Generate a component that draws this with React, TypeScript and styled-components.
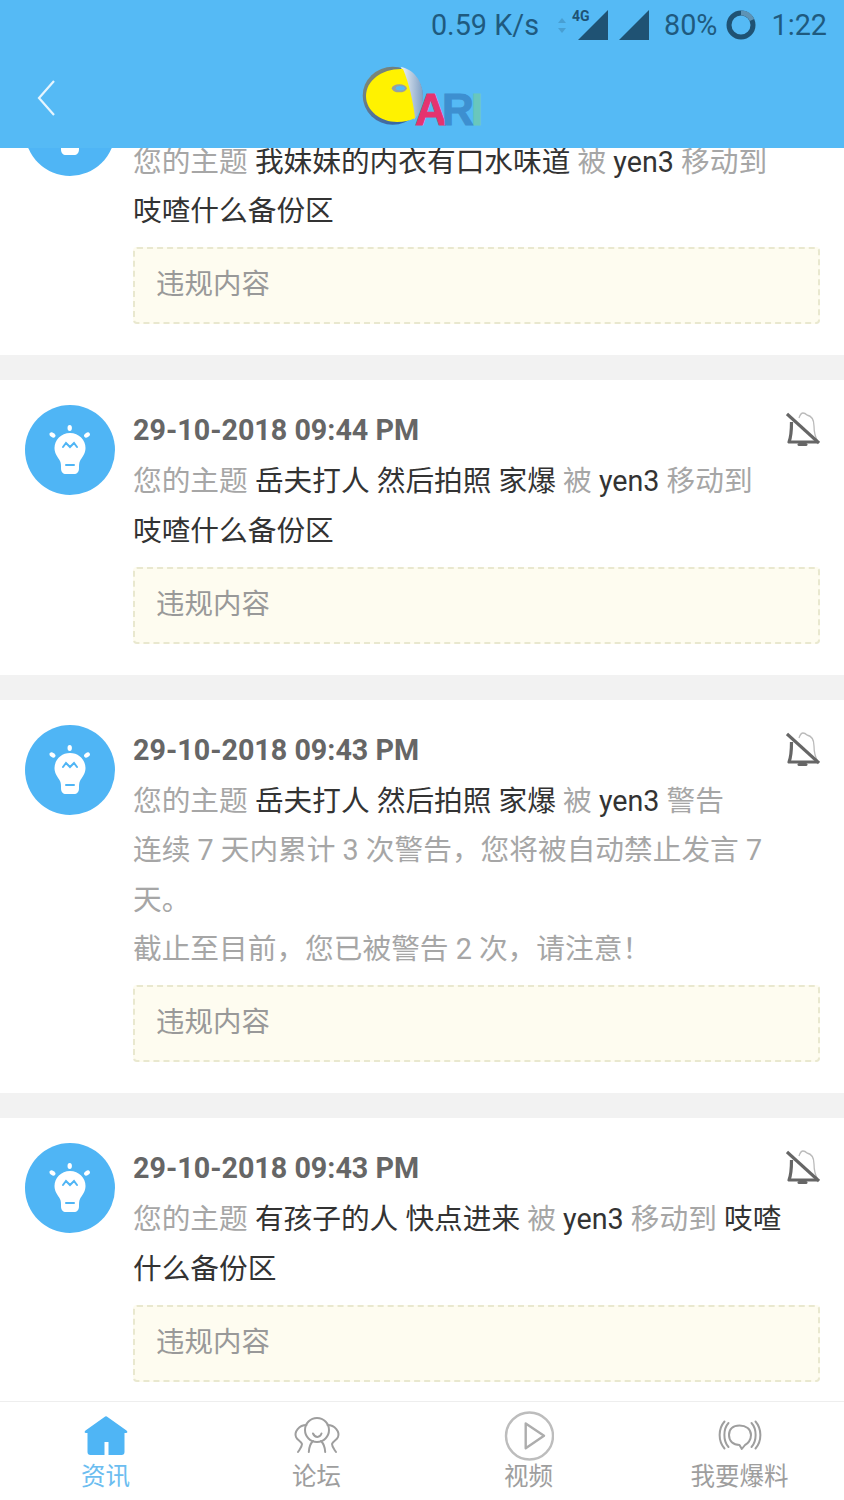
import styled, { createGlobalStyle } from "styled-components";

const GlobalStyle = createGlobalStyle`
  html, body {
    margin: 0;
    padding: 0;
    background: #fff;
  }
  body {
    font-family: Roboto, "Noto Sans CJK SC", sans-serif;
  }
`

type Part = { text: string, dark?: boolean }

type Notice = {
    date: string
    lines: Part[]
}

const notices: Notice[] = [
    {
        date: "29-10-2018 09:44 PM",
        lines: [
            { text: "您的主题 " },
            { text: "我妹妹的内衣有口水味道", dark: true },
            { text: " 被 " },
            { text: "yen3", dark: true },
            { text: " 移动到 " },
            { text: "吱喳什么备份区", dark: true },
        ],
    },
    {
        date: "29-10-2018 09:44 PM",
        lines: [
            { text: "您的主题 " },
            { text: "岳夫打人 然后拍照 家爆", dark: true },
            { text: " 被 " },
            { text: "yen3", dark: true },
            { text: " 移动到 " },
            { text: "吱喳什么备份区", dark: true },
        ],
    },
    {
        date: "29-10-2018 09:43 PM",
        lines: [
            { text: "您的主题 " },
            { text: "岳夫打人 然后拍照 家爆", dark: true },
            { text: " 被 " },
            { text: "yen3", dark: true },
            { text: " 警告\n连续 7 天内累计 3 次警告，您将被自动禁止发言 7 天。\n截止至目前，您已被警告 2 次，请注意！" },
        ],
    },
    {
        date: "29-10-2018 09:43 PM",
        lines: [
            { text: "您的主题 " },
            { text: "有孩子的人 快点进来", dark: true },
            { text: " 被 " },
            { text: "yen3", dark: true },
            { text: " 移动到 " },
            { text: "吱喳什么备份区", dark: true },
        ],
    },
]

const BackIcon = () => (
    <svg width="20" height="38" viewBox="0 0 20 38" fill="none">
        <path d="M18 2 L3 19 L18 36" stroke="#e6f5fe" strokeWidth="2.2" />
    </svg>
)

const Logo = () => (
    <LogoSvg width="130" height="72" viewBox="0 0 130 72">
        <defs>
            <linearGradient id="rim" x1="0" y1="0" x2="1" y2="1">
                <stop offset="0" stopColor="#8c8f6a" />
                <stop offset="0.55" stopColor="#4f6f9c" />
                <stop offset="1" stopColor="#1f5fae" />
            </linearGradient>
            <linearGradient id="shine" x1="0" y1="0" x2="1" y2="0">
                <stop offset="0" stopColor="#eef3f8" />
                <stop offset="1" stopColor="#7f9fc4" />
            </linearGradient>
        </defs>
        <ellipse cx="35.700" cy="30.700" rx="30" ry="29" fill="url(#rim)" />
        <path d="M44 2 C56 4 66 16 66 31 C66 41 62 49 57 55 C53 40 50 18 44 2 Z" fill="url(#shine)" />
        <path d="M46 4 C26 3 9 15 9 31 C9 46 24 57 40 57 C47 57 53 55.500 58 53 C56 36 52 18 46 4 Z" fill="#fff200" />
        <ellipse cx="42.300" cy="23.300" rx="7.500" ry="4" fill="#98a0a0" />
        <ellipse cx="43.300" cy="23.300" rx="4.500" ry="2.200" fill="#55baf5" />
        <LogoLetter x="58" y="60" fill="#e5336f" stroke="#e5336f">A</LogoLetter>
        <LogoLetter x="85" y="60" fill="#3d8fd0" stroke="#3d8fd0">R</LogoLetter>
        <LogoLetter x="114" y="60" fill="#6fcbb0" stroke="#6fcbb0" opacity="0.8">I</LogoLetter>
    </LogoSvg>
)

const NetArrows = () => (
    <svg width="10" height="15" viewBox="0 0 10 15" fill="#3f8ab8" opacity="0.55">
        <path d="M5 0 L9 5 L1 5 Z" />
        <path d="M5 15 L9 10 L1 10 Z" />
    </svg>
)

const Signal = () => (
    <svg width="30" height="30" viewBox="0 0 30 30" fill="#1f5273">
        <path d="M30 0 V30 H0 Z" />
    </svg>
)

const BatteryRing = () => (
    <svg width="30" height="30" viewBox="0 0 30 30" fill="none">
        <circle cx="15" cy="15" r="12" stroke="#1f5273" strokeWidth="5" />
        <path d="M15 3 A12 12 0 0 1 26 10" stroke="#5d93b5" strokeWidth="5" />
    </svg>
)

const BulbIcon = () => (
    <svg width="90" height="90" viewBox="0 0 90 90">
        <circle cx="45" cy="45" r="45" fill="#4fb5f5" />
        <path d="M45 28 C36 28 29.500 35 29.500 43 C29.500 49 33 52 35 56 C36 58 36 60 36 63 C36 67 38 69 41 69 H49 C52 69 54 67 54 63 C54 60 54 58 55 56 C57 52 60.500 49 60.500 43 C60.500 35 54 28 45 28 Z" fill="#fff" />
        <path d="M38 42 L41 38 L45 42 L49 38 L52 42" stroke="#4fb5f5" strokeWidth="2" fill="none" strokeLinecap="round" />
        <path d="M41 60 H49" stroke="#4fb5f5" strokeWidth="2" strokeLinecap="round" />
        <ellipse cx="44.700" cy="23" rx="2.200" ry="3" fill="#fff" />
        <ellipse cx="27.500" cy="30" rx="3.200" ry="2.200" fill="#fff" transform="rotate(35 27.500 30)" />
        <ellipse cx="62" cy="30" rx="3.200" ry="2.200" fill="#fff" transform="rotate(-35 62 30)" />
    </svg>
)

const MutedBell = () => (
    <svg width="34" height="36" viewBox="0 0 34 36" fill="none">
        <path d="M13 6 C14 3 15 1 17 1 C19 1 20 2 21 3 C26 4 28 9 28 14 C28 20 29 25 32 30" stroke="#bbb" strokeWidth="1.300" />
        <path d="M5.500 10 C5.500 18 5.500 24 3 30 H31" stroke="#666" strokeWidth="3.200" strokeLinejoin="round" />
        <path d="M1 2 L33 31" stroke="#666" strokeWidth="3.200" />
        <path d="M13 32.500 H20" stroke="#666" strokeWidth="3" strokeLinecap="round" />
    </svg>
)

const HomeIcon = () => (
    <svg width="50" height="50" viewBox="0 0 50 50">
        <path d="M23.500 6 C24.500 5 25.500 5 26.500 6 L45.500 19.500 C47 20.700 46.500 22 45 22 H43.500 V41 C43.500 43 42.500 44 40.500 44 H9.500 C7.500 44 6.500 43 6.500 41 V22 H5 C3.500 22 3 20.700 4.500 19.500 Z" fill="#4fb5f5" />
        <rect x="23.500" y="31" width="4" height="13" fill="#fff" />
    </svg>
)

const PeopleIcon = () => (
    <svg width="50" height="50" viewBox="0 0 50 50" fill="none" stroke="#9e9e9e" strokeWidth="2" strokeLinecap="round">
        <circle cx="25" cy="19" r="12" />
        <path d="M21 22.500 C23 27 28 27 29.500 22.500" />
        <path d="M14.500 14 C7 14 2 21 4 26 C5 29 9 30 10 33 C10 36 8 38 6 41" />
        <path d="M35.500 14 C43 14 48 21 46 26 C45 29 41 30 40 33 C40 36 42 38 44 41" />
        <path d="M21 30 C18 33 17 37 16.800 41" />
        <path d="M29 30 C32 33 33 37 33.200 41" />
    </svg>
)

const PlayIcon = () => (
    <svg width="50" height="50" viewBox="0 0 50 50" fill="none" stroke="#bdbdbd" strokeWidth="2.400">
        <circle cx="25.500" cy="25" r="23.500" />
        <path d="M21.700 12.500 L40 24.800 L21.700 37.300 Z" stroke="#adadad" strokeLinejoin="round" />
    </svg>
)

const ShoutIcon = () => (
    <svg width="50" height="50" viewBox="1 0 50 50" fill="none" stroke="#9e9e9e" strokeWidth="2" strokeLinecap="round" strokeLinejoin="round">
        <path d="M25.500 14.500 C32 14.500 37 18 37 24 C37 29.500 33.500 33 31 34 L27.800 38 L25.500 34 C19 34 15 30 15 24 C15 18 19 14.500 25.500 14.500 Z" />
        <path d="M10.500 10.500 C4 18 4 30 10.500 37.500" />
        <path d="M14.500 12 C9 18 9 30 14.500 36" />
        <path d="M41.500 10.500 C48 18 48 30 41.500 37.500" />
        <path d="M37.500 12 C43 18 43 30 37.500 36" />
    </svg>
)

const tabs = [
    { label: "资讯", icon: <HomeIcon />, active: true },
    { label: "论坛", icon: <PeopleIcon />, active: false },
    { label: "视频", icon: <PlayIcon />, active: false },
    { label: "我要爆料", icon: <ShoutIcon />, active: false },
]

export default function App() {
    return (
        <Screen>
            <GlobalStyle />
            <Header>
                <StatusBar>
                    <Speed>0.59 K/s</Speed>
                    <NetGroup>
                        <NetArrows />
                        <NetBadge>4G</NetBadge>
                        <Signal />
                    </NetGroup>
                    <Signal />
                    <Battery>80%</Battery>
                    <BatteryRing />
                    <Clock>1:22</Clock>
                </StatusBar>
                <Toolbar>
                    <BackButton><BackIcon /></BackButton>
                    <Logo />
                    <span />
                </Toolbar>
            </Header>
            <Feed>
                <FeedInner>
                    {notices.map((notice, i) => (
                        <Card key={i}>
                            <Avatar><BulbIcon /></Avatar>
                            <Body>
                                <DateRow>
                                    <DateText>{notice.date}</DateText>
                                    <MutedBell />
                                </DateRow>
                                <Message>
                                    {notice.lines.map((part, j) => (
                                        <Part key={j} $dark={part.dark}>{part.text}</Part>
                                    ))}
                                </Message>
                                <ViolationBox>违规内容</ViolationBox>
                            </Body>
                        </Card>
                    ))}
                </FeedInner>
            </Feed>
            <TabBar>
                {tabs.map(tab => (
                    <Tab key={tab.label}>
                        <TabIcon>{tab.icon}</TabIcon>
                        <TabLabel $active={tab.active}>{tab.label}</TabLabel>
                    </Tab>
                ))}
            </TabBar>
        </Screen>
    )
}

const Screen = styled.div`
  width: 844px;
  height: 1500px;
  display: flex;
  flex-direction: column;
  overflow: hidden;
  background: #fff;
`

const Header = styled.header`
  height: 148px;
  flex-shrink: 0;
  background: #55baf5;
  position: relative;
  z-index: 2;
`

const StatusBar = styled.div`
  height: 50px;
  display: flex;
  align-items: center;
  justify-content: flex-end;
  padding-right: 17px;
  color: #1f5a7f;
  font-size: 28.8px;
`

const Speed = styled.span`
  margin-right: 18px;
`

const NetGroup = styled.div`
  display: flex;
  align-items: center;
  position: relative;
  width: 51px;
  justify-content: space-between;
  margin-right: 11px;
`

const NetBadge = styled.span`
  position: absolute;
  left: 15px;
  top: -1px;
  font-size: 14px;
  font-weight: 700;
  line-height: 14px;
  color: #1f5273;
`

const Battery = styled.span`
  margin-left: 15px;
  margin-right: 9px;
`

const Clock = styled.span`
  margin-left: 15px;
`

const Toolbar = styled.div`
  height: 98px;
  display: grid;
  grid-template-columns: 1fr auto 1fr;
  align-items: center;
`

const BackButton = styled.div`
  padding-left: 36px;
  display: flex;
  margin-top: -2px;
`

const LogoSvg = styled.svg`
  margin-top: 4px;
`

const LogoLetter = styled.text`
  font-family: "Liberation Sans", sans-serif;
  font-weight: 700;
  font-size: 44px;
  stroke-width: 1px;
`

const Feed = styled.main`
  flex: 1;
  min-height: 0;
  overflow: hidden;
`

const FeedInner = styled.div`
  margin-top: -87.5px;
  display: flex;
  flex-direction: column;
  gap: 25px;
  background: #f2f2f2;
`

const Card = styled.article`
  display: flex;
  align-items: flex-start;
  gap: 18px;
  padding: 25px 24px 31px 25px;
  background: #fff;
`

const Avatar = styled.div`
  width: 90px;
  height: 90px;
  flex-shrink: 0;
`

const Body = styled.div`
  flex: 1;
  min-width: 0;
`

const DateRow = styled.div`
  height: 50px;
  display: flex;
  align-items: center;
  justify-content: space-between;
`

const DateText = styled.div`
  font-size: 28.7px;
  font-weight: 700;
  color: #666;
`

const Message = styled.p`
  margin: 2px 0 0;
  width: 653px;
  font-size: 28.7px;
  line-height: 49.5px;
  white-space: pre-wrap;
`

const Part = styled.span<{ $dark?: boolean }>`
  color: ${p => p.$dark ? "#333" : "#a6a6a6"};
`

const ViolationBox = styled.div`
  margin-top: 10.5px;
  height: 77px;
  box-sizing: border-box;
  display: flex;
  align-items: center;
  padding-left: 21px;
  padding-bottom: 8px;
  background: #fefcf0;
  border: 2px dashed #e9e8cf;
  border-radius: 4px;
  font-size: 28.5px;
  color: #999;
`

const TabBar = styled.nav`
  height: 99px;
  flex-shrink: 0;
  box-sizing: border-box;
  display: grid;
  grid-template-columns: 211px 211px 213px 209px;
  border-top: 1px solid #eee;
  background: #fff;
`

const Tab = styled.div`
  display: flex;
  flex-direction: column;
  align-items: center;
  padding-top: 9px;
`

const TabIcon = styled.div`
  width: 50px;
  height: 50px;
`

const TabLabel = styled.span<{ $active?: boolean }>`
  font-size: 24.5px;
  line-height: 31px;
  color: ${p => p.$active ? "#6cbdf0" : "#9e9e9e"};
`
